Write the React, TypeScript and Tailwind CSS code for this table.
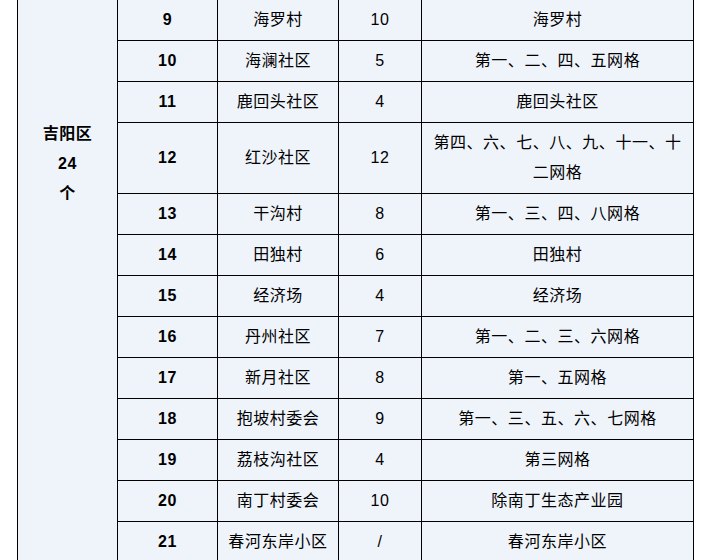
import React from "react";

type Row = { no: number; name: string; count: string; grid: string };

const rows: Row[] = [
    { no: 9, name: "海罗村", count: "10", grid: "海罗村" },
    { no: 10, name: "海澜社区", count: "5", grid: "第一、二、四、五网格" },
    { no: 11, name: "鹿回头社区", count: "4", grid: "鹿回头社区" },
    { no: 12, name: "红沙社区", count: "12", grid: "第四、六、七、八、九、十一、十二网格" },
    { no: 13, name: "干沟村", count: "8", grid: "第一、三、四、八网格" },
    { no: 14, name: "田独村", count: "6", grid: "田独村" },
    { no: 15, name: "经济场", count: "4", grid: "经济场" },
    { no: 16, name: "丹州社区", count: "7", grid: "第一、二、三、六网格" },
    { no: 17, name: "新月社区", count: "8", grid: "第一、五网格" },
    { no: 18, name: "抱坡村委会", count: "9", grid: "第一、三、五、六、七网格" },
    { no: 19, name: "荔枝沟社区", count: "4", grid: "第三网格" },
    { no: 20, name: "南丁村委会", count: "10", grid: "除南丁生态产业园" },
    { no: 21, name: "春河东岸小区", count: "/", grid: "春河东岸小区" },
];

const cell = "border border-black px-[5px] py-[5px] leading-[30px] text-center align-middle";

export default function App() {
    return (
        <div className="h-[560px] w-[709px] overflow-hidden bg-white font-['Liberation_Sans','Noto_Sans_CJK_SC',sans-serif] text-[16px] tracking-[0.544px] text-black">
            {/* 表格（从第9行开始可见） */}
            <table className="ml-[17px] mt-[-1px] w-[677px] table-fixed border-collapse bg-[#eff4fb]">
                <colgroup>
                    <col className="w-[100px]" />
                    <col className="w-[100px]" />
                    <col className="w-[121px]" />
                    <col className="w-[83px]" />
                    <col className="w-[272px]" />
                </colgroup>
                <tbody>
                    {rows.map((r, i) => (
                        <tr key={r.no}>
                            {i === 0 && (
                                <td rowSpan={rows.length} className="border border-black px-[5px] pt-[119px] text-center align-top font-bold leading-[30px]">
                                    吉阳区<br />24<br />个
                                </td>
                            )}
                            <td className={`${cell} font-bold`}>{r.no}</td>
                            <td className={cell}>{r.name}</td>
                            <td className={cell}>{r.count}</td>
                            <td className={cell}>{r.grid}</td>
                        </tr>
                    ))}
                </tbody>
            </table>
        </div>
    );
}
